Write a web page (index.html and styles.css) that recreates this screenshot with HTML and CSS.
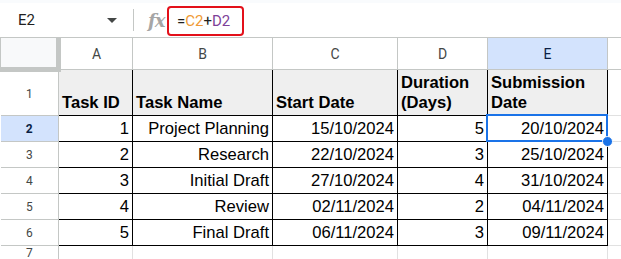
FILE: index.html
```html
<!DOCTYPE html>
<html lang="en">

<head>
  <meta charset="UTF-8">
  <meta name="viewport" content="width=device-width, initial-scale=1.0">
  <title>Sheet</title>
  <link rel="stylesheet" href="styles.css">
</head>

<body>
  <div class="top-strip"></div>
  <div class="formula-bar">
    <div class="name-box">
      <span class="name">E2</span>
      <span class="caret"></span>
    </div>
    <div class="sep"></div>
    <div class="fx">fx</div>
    <div class="formula">=<span class="ref-c">C2</span>+<span class="ref-d">D2</span></div>
  </div>

  <table class="grid">
    <colgroup>
      <col class="w-rh">
      <col class="w-a">
      <col class="w-b">
      <col class="w-c">
      <col class="w-d">
      <col class="w-e">
      <col class="w-f">
    </colgroup>
    <tr class="col-heads">
      <th class="corner"></th>
      <th>A</th>
      <th>B</th>
      <th>C</th>
      <th>D</th>
      <th class="active">E</th>
      <th></th>
    </tr>
    <tr class="r1">
      <th class="rh">1</th>
      <td class="head">Task ID</td>
      <td class="head">Task Name</td>
      <td class="head">Start Date</td>
      <td class="head">Duration<br>(Days)</td>
      <td class="head">Submission<br>Date</td>
      <td class="empty"></td>
    </tr>
    <tr>
      <th class="rh active">2</th>
      <td>1</td>
      <td>Project Planning</td>
      <td>15/10/2024</td>
      <td>5</td>
      <td class="selected">20/10/2024</td>
      <td class="empty"></td>
    </tr>
    <tr>
      <th class="rh">3</th>
      <td>2</td>
      <td>Research</td>
      <td>22/10/2024</td>
      <td>3</td>
      <td>25/10/2024</td>
      <td class="empty"></td>
    </tr>
    <tr>
      <th class="rh">4</th>
      <td>3</td>
      <td>Initial Draft</td>
      <td>27/10/2024</td>
      <td>4</td>
      <td>31/10/2024</td>
      <td class="empty"></td>
    </tr>
    <tr>
      <th class="rh">5</th>
      <td>4</td>
      <td>Review</td>
      <td>02/11/2024</td>
      <td>2</td>
      <td>04/11/2024</td>
      <td class="empty"></td>
    </tr>
    <tr>
      <th class="rh">6</th>
      <td>5</td>
      <td>Final Draft</td>
      <td>06/11/2024</td>
      <td>3</td>
      <td>09/11/2024</td>
      <td class="empty"></td>
    </tr>
    <tr class="r7">
      <th class="rh">7</th>
      <td class="blank"></td>
      <td class="blank"></td>
      <td class="blank"></td>
      <td class="blank"></td>
      <td class="blank"></td>
      <td class="blank"></td>
    </tr>
  </table>
</body>

</html>
```

FILE: styles.css
```css
body {
  margin: 0;
  background: #fff;
  font-family: Arial, "Liberation Sans", sans-serif;
  overflow: hidden;
}

.top-strip {
  height: 3px;
  background: #f9fbfd;
}

.formula-bar {
  height: 34px;
  display: flex;
  align-items: center;
  border-bottom: 1px solid #c4c7c5;
  font-family: Roboto, Arial, sans-serif;
}

.name-box {
  width: 123px;
  display: flex;
  align-items: center;
  justify-content: space-between;
  padding-left: 18px;
  padding-right: 6px;
  box-sizing: border-box;
  font-size: 15px;
  color: #1f1f1f;
}

.caret {
  width: 0;
  height: 0;
  border-left: 5px solid transparent;
  border-right: 5px solid transparent;
  border-top: 5px solid #444746;
  margin-top: 1px;
}

.sep {
  width: 1px;
  height: 22px;
  background: #c4c7c5;
  margin-left: 10px;
}

.fx {
  margin-left: 14px;
  font-family: "DejaVu Serif", "Liberation Serif", serif;
  font-style: italic;
  font-weight: bold;
  font-size: 18px;
  color: #a6a6a6;
  letter-spacing: -1px;
  width: 19px;
}

.formula {
  margin-left: 0;
  margin-top: 1px;
  height: 30px;
  width: 77px;
  box-sizing: border-box;
  border: 2px solid #e3101a;
  border-radius: 4px;
  font-size: 15px;
  line-height: 26px;
  padding-left: 8px;
  color: #1f1f1f;
}

.ref-c {
  color: #f09a34;
}

.ref-d {
  color: #7e3f98;
}

.grid {
  border-collapse: collapse;
  table-layout: fixed;
  width: 622px;
}

.w-rh { width: 58px; }
.w-a { width: 74px; }
.w-b { width: 140px; }
.w-c { width: 125px; }
.w-d { width: 90px; }
.w-e { width: 120px; }
.w-f { width: 15px; }

.col-heads th {
  height: 29px;
  padding: 0;
  border: 1px solid #c4c7c5;
  border-top: 0;
  font-family: Roboto, Arial, sans-serif;
  font-weight: normal;
  font-size: 14px;
  color: #444746;
  background: #fff;
}

.col-heads th.corner {
  background: #f8f9fa;
  border-right: 5px solid #c4c7c5;
  border-bottom: 5px solid #c4c7c5;
}

.col-heads th.active {
  background: #d3e3fd;
  color: #0b1f45;
}

.rh {
  padding: 0;
  border-right: 1px solid #c4c7c5;
  border-bottom: 1px solid #c4c7c5;
  font-family: Roboto, Arial, sans-serif;
  font-weight: normal;
  font-size: 12px;
  color: #444746;
  background: #fff;
}

.rh.active {
  background: #d3e3fd;
  font-weight: bold;
  color: #0b1f45;
}

td {
  height: 25px;
  padding: 0 3px;
  border: 1px solid #000;
  font-size: 16.6px;
  color: #000;
  text-align: right;
  white-space: nowrap;
  overflow: visible;
}

.r1 td {
  height: 43px;
}

td.head {
  background: #efefef;
  font-weight: bold;
  text-align: left;
  vertical-align: bottom;
  line-height: 20px;
  padding-bottom: 2px;
}

td.empty {
  border-top: 0;
  border-right: 0;
  border-bottom: 1px solid #e1e1e1;
}

.r7 td {
  height: 14px;
  border: 0;
  border-right: 1px solid #e1e1e1;
}

.r7 td:last-child {
  border-right: 0;
}

td.selected {
  position: relative;
}

td.selected::after {
  content: "";
  position: absolute;
  left: -2px;
  top: -2px;
  right: -1px;
  bottom: -1px;
  border: 2px solid #1a73e8;
}

td.selected::before {
  content: "";
  position: absolute;
  right: -6px;
  bottom: -6px;
  width: 9px;
  height: 9px;
  border-radius: 50%;
  background: #1a73e8;
  border: 1px solid #fff;
  z-index: 2;
}
```
